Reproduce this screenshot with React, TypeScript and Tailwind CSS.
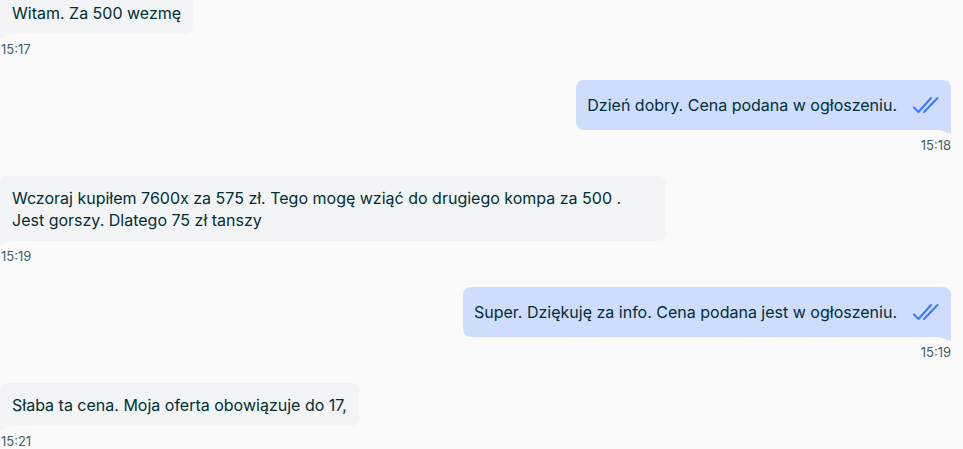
import React from 'react';

type Msg = { text: string; time: string; mine: boolean };

const messages: Msg[] = [
  { text: 'Witam. Za 500 wezmę', time: '15:17', mine: false },
  { text: 'Dzień dobry. Cena podana w ogłoszeniu.', time: '15:18', mine: true },
  {
    text: 'Wczoraj kupiłem 7600x za 575 zł. Tego mogę wziąć do drugiego kompa za 500 . Jest gorszy. Dlatego 75 zł tanszy',
    time: '15:19',
    mine: false,
  },
  { text: 'Super. Dziękuję za info. Cena podana jest w ogłoszeniu.', time: '15:19', mine: true },
  { text: 'Słaba ta cena. Moja oferta obowiązuje do 17,', time: '15:21', mine: false },
];

function DoubleCheck() {
  return (
    <svg width="28" height="18" viewBox="0 0 28 18" fill="none" stroke="#3a77ff" strokeWidth={2} strokeLinecap="round" strokeLinejoin="round">
      <path d="M2 11.5 L6.5 16 L19 2" />
      <path d="M12 16 L25.5 2" />
    </svg>
  );
}

function Bubble({ msg }: { msg: Msg }) {
  if (msg.mine) {
    return (
      <div className="flex flex-col items-end">
        <div className="relative flex items-center gap-[15px] rounded-lg rounded-br-none bg-[#cedcfe] pl-[11px] pr-[11px] py-[14px] text-[#002f34]">
          <span className="leading-[22px]">{msg.text}</span>
          <DoubleCheck />
          <span className="absolute right-0 top-full h-[4px] w-[12px] bg-[#cedcfe] [clip-path:polygon(0_0,100%_0,100%_100%)]" />
        </div>
        <span className="mt-[7px] text-[13px] leading-4 text-[#406367]">{msg.time}</span>
      </div>
    );
  }
  return (
    <div className="flex flex-col items-start">
      <div className="relative max-w-[666px] rounded-lg rounded-bl-none bg-[#f2f4f5] pl-[12px] pr-[12px] pt-[11px] pb-[10px] text-[#002f34]">
        <span className="leading-[22px] block">{msg.text}</span>
        <span className="absolute left-0 top-full h-[4px] w-[12px] bg-[#f2f4f5] [clip-path:polygon(0_0,100%_0,0_100%)]" />
      </div>
      <span className="mt-[7px] pl-px text-[13px] leading-4 text-[#406367]">{msg.time}</span>
    </div>
  );
}

export default function App() {
  return (
    <div className="h-[449px] w-[963px] overflow-hidden bg-[#f9faf9] font-['Inter',sans-serif] text-[16px]">
      <div className="-mt-[9px] flex flex-col gap-[23px] pr-[12px]">
        {messages.map((m, i) => (
          <Bubble key={i} msg={m} />
        ))}
      </div>
    </div>
  );
}
